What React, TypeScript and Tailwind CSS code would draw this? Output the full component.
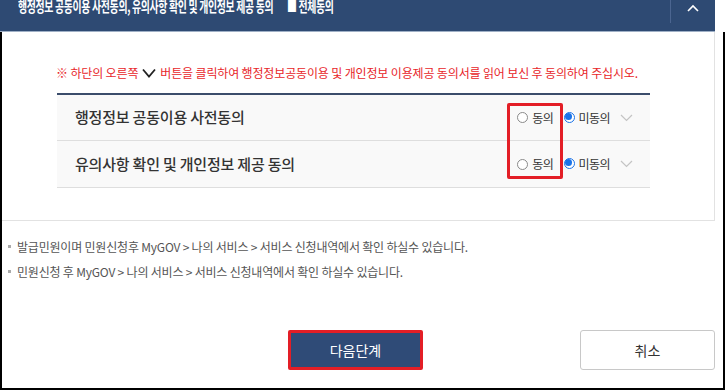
import React from "react";

const font = { fontFamily: '"Noto Sans CJK KR", "Noto Sans", sans-serif' };

function Radio({ checked }: { checked: boolean }) {
  return checked ? (
    <span className="inline-block w-[11px] h-[11px] rounded-full border border-[#1a73e8] bg-white flex items-center justify-center">
      <span className="block w-[7px] h-[7px] rounded-full bg-[#1a73e8]" />
    </span>
  ) : (
    <span className="inline-block w-[11px] h-[11px] rounded-full border border-[#8a8a8a] bg-white" />
  );
}

function Row({ title, last }: { title: string; last?: boolean }) {
  return (
    <div className={`h-[46px] bg-[#f9f9f9] flex items-center pl-[18px] pr-[17px] ${last ? "" : "border-b border-[#dedede]"}`}>
      <span className="text-[15px] font-medium text-[#333] tracking-[-0.2px]">{title}</span>
      <div className="ml-auto flex items-center text-[12px] text-[#333] tracking-[-0.5px]">
        <Radio checked={false} />
        <span className="ml-[4px]">동의</span>
        <span className="ml-[11px]"><Radio checked /></span>
        <span className="ml-[3px]">미동의</span>
        <svg width="13" height="8" viewBox="0 0 13 8" className="ml-[10px]">
          <path d="M1 1 L6.5 6.5 L12 1" fill="none" stroke="#c4c4c4" strokeWidth="1.2" />
        </svg>
      </div>
    </div>
  );
}

export default function App() {
  return (
    <div className="w-[725px] h-[390px] bg-white flex flex-col overflow-hidden relative" style={font}>
      {/* header */}
      <div className="w-[715px] h-[32px] bg-[#2e4a73] border-b border-[#9fb0c6] flex items-start shrink-0">
        <div className="pl-[18px] -mt-[4px] flex items-center text-white font-bold text-[15px] leading-[20px] whitespace-nowrap">
          <span className="inline-block origin-left scale-x-[0.66] w-[258px] tracking-[-0.5px]">
            행정정보 공동이용 사전동의, 유의사항 확인 및 개인정보 제공 동의
          </span>
        </div>
        <div className="ml-[11px] -mt-[4px] flex items-center text-white font-bold text-[15px] leading-[20px] whitespace-nowrap">
          <span className="inline-block origin-left scale-x-[0.66] tracking-[-0.5px]">■ 전체동의</span>
        </div>
        <div className="ml-auto w-[45px] h-[23px] border-l border-[#4b6590] flex justify-center pt-[4px]">
          <svg width="12" height="8" viewBox="0 0 12 8">
            <path d="M1 7 L6 2 L11 7" fill="none" stroke="#ffffff" strokeWidth="1.6" />
          </svg>
        </div>
      </div>

      {/* body */}
      <div className="flex-1 border-l-2 border-r-2 border-b-2 border-black flex flex-col">
        <div className="w-[713px] h-[189px] border-r border-b border-[#e2e2e2] flex flex-col pt-[32px]">
          <div className="pl-[54px] h-[18px] flex items-center text-[12px] text-[#e8262a] tracking-[-0.15px] whitespace-nowrap">
            <span>※ 하단의 오른쪽</span>
            <svg width="14" height="10" viewBox="0 0 14 10" className="mx-[4px]">
              <path d="M1 1.5 L7 8.5 L13 1.5" fill="none" stroke="#222" strokeWidth="1.8" />
            </svg>
            <span>버튼을 클릭하여 행정정보공동이용 및 개인정보 이용제공 동의서를 읽어 보신 후 동의하여 주십시오.</span>
          </div>
          <div className="ml-[55px] w-[593px] mt-[11px] border-t-2 border-[#3b4d6b] border-b border-b-[#dedede]">
            <Row title="행정정보 공동이용 사전동의" />
            <Row title="유의사항 확인 및 개인정보 제공 동의" last />
          </div>
        </div>

        <div className="mt-[13px] pl-[6px] text-[12px] text-[#555] tracking-[-0.2px] leading-[25px]">
          <div className="flex items-center">
            <span className="w-[3px] h-[3px] bg-[#aaa] mr-[6px]" />
            발급민원이며 민원신청후 MyGOV &gt; 나의 서비스 &gt; 서비스 신청내역에서 확인 하실수 있습니다.
          </div>
          <div className="flex items-center">
            <span className="w-[3px] h-[3px] bg-[#aaa] mr-[6px]" />
            민원신청 후 MyGOV &gt; 나의 서비스 &gt; 서비스 신청내역에서 확인 하실수 있습니다.
          </div>
        </div>

        <div className="mt-[46px] flex pl-[286px]">
          <button className="w-[135px] h-[40px] bg-[#2f4b77] border-[3px] border-[#e31e26] rounded-[2px] text-white text-[14px]">
            다음단계
          </button>
          <button className="ml-[157px] w-[135px] h-[40px] bg-white border border-[#c8c8c8] rounded-[3px] text-[#333] text-[14px]">
            취소
          </button>
        </div>
      </div>

      {/* red highlight box */}
      <div className="absolute left-[507px] top-[103px] w-[56px] h-[76px] border-[3px] border-[#e31e26] rounded-[2px]" />
    </div>
  );
}
